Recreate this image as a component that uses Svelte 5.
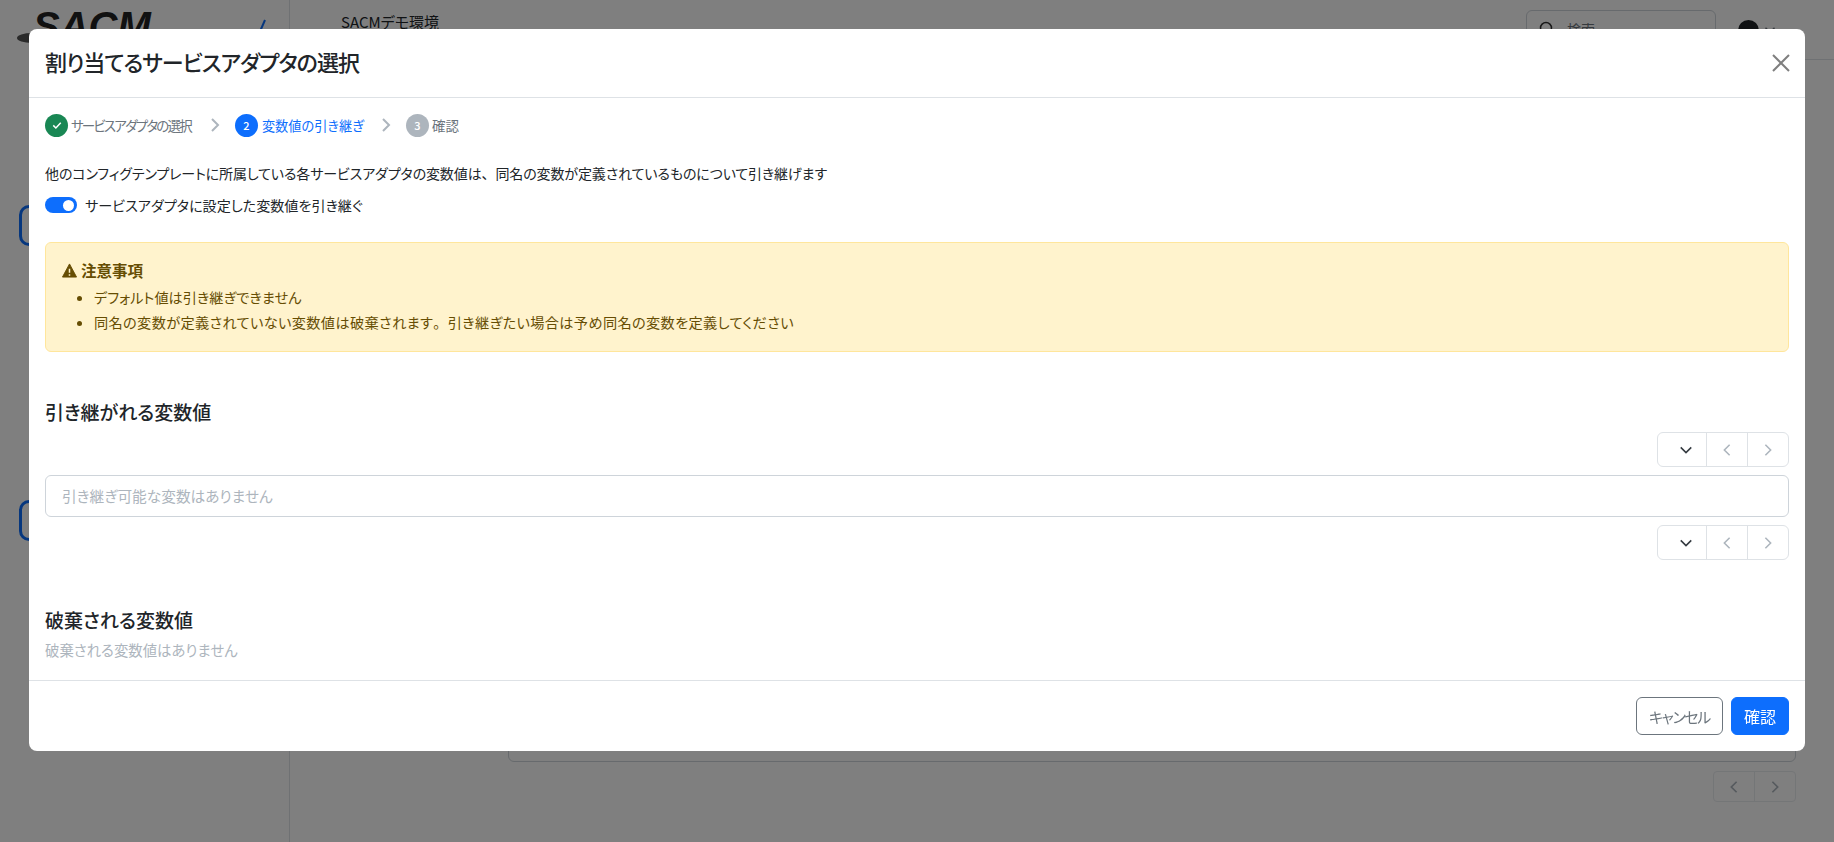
<script>
  const notes = [
    ['デフォルト値は引き継ぎできません'],
    ['同名の変数が定義されていない変数値は破棄されます', '引き継ぎたい場合は予め同名の変数を定義してください']
  ];
</script>

{#snippet pager()}
  <div class="pager">
    <button class="pg size" aria-label="件数">
      <svg width="14" height="14" viewBox="0 0 16 16"><path d="M2 5l6 6 6-6" fill="none" stroke="#343a40" stroke-width="1.8" /></svg>
    </button>
    <button class="pg" aria-label="前へ">
      <svg width="14" height="14" viewBox="0 0 16 16"><path d="M11 2L5 8l6 6" fill="none" stroke="#adb5bd" stroke-width="1.8" /></svg>
    </button>
    <button class="pg" aria-label="次へ">
      <svg width="14" height="14" viewBox="0 0 16 16"><path d="M5 2l6 6-6 6" fill="none" stroke="#adb5bd" stroke-width="1.8" /></svg>
    </button>
  </div>
{/snippet}

{#snippet sep()}
  <svg class="sep" width="14" height="16" viewBox="0 0 14 16"><path d="M4 2l6 6-6 6" fill="none" stroke="#adb5bd" stroke-width="2" /></svg>
{/snippet}

<div class="page">
  <aside class="sidebar">
    <div class="brand">
      <div class="logo">
        <span class="swoosh"></span>
        <span class="logo-text">SACM</span>
      </div>
      <svg class="collapse" width="12" height="20" viewBox="0 0 12 20"><path d="M10 2L3 18" fill="none" stroke="#0d6efd" stroke-width="2" /></svg>
    </div>
    <div class="side-item"></div>
    <div class="side-item second"></div>
  </aside>
  <main class="main">
    <header class="topbar">
      <span class="env">SACMデモ環境</span>
      <div class="search">
        <svg width="16" height="16" viewBox="0 0 16 16"><circle cx="7" cy="7" r="5.5" fill="none" stroke="#333" stroke-width="1.5" /><path d="M11 11l4 4" stroke="#333" stroke-width="1.5" /></svg>
        <span>検索</span>
      </div>
      <span class="avatar"></span>
      <svg class="caret" width="12" height="12" viewBox="0 0 16 16"><path d="M2 5l6 6 6-6" fill="none" stroke="#6c757d" stroke-width="2" /></svg>
    </header>
    <div class="content">
      <div class="card"></div>
      <div class="bg-pager">
        <span><svg width="14" height="14" viewBox="0 0 16 16"><path d="M11 2L5 8l6 6" fill="none" stroke="#adb5bd" stroke-width="2" /></svg></span>
        <span><svg width="14" height="14" viewBox="0 0 16 16"><path d="M5 2l6 6-6 6" fill="none" stroke="#adb5bd" stroke-width="2" /></svg></span>
      </div>
    </div>
  </main>
</div>

<div class="backdrop">
  <div class="modal">
    <div class="modal-header">
      <h1>割り当てるサービスアダプタの選択</h1>
      <button class="close" aria-label="閉じる">
        <svg width="20" height="20" viewBox="0 0 20 20"><path d="M2 2l16 16M18 2L2 18" stroke="#7f7f7f" stroke-width="2" /></svg>
      </button>
    </div>

    <div class="modal-body">
      <div class="steps">
        <span class="circle done">
          <svg width="12" height="12" viewBox="0 0 16 16"><path d="M3 8.5l3.5 3.5L13 5" fill="none" stroke="#fff" stroke-width="2" /></svg>
        </span>
        <span class="step-label kana">サービスアダプタの選択</span>
        {@render sep()}
        <span class="circle active">2</span>
        <span class="step-label current">変数値の引き継ぎ</span>
        {@render sep()}
        <span class="circle todo">3</span>
        <span class="step-label">確認</span>
      </div>

      <p class="lead">他のコンフィグテンプレートに所属している各サービスアダプタの変数値は<span class="wide">、</span>同名の変数が定義されているものについて引き継げます</p>

      <div class="switch-row">
        <span class="switch"><span class="knob"></span></span>
        <span>サービスアダプタに設定した変数値を引き継ぐ</span>
      </div>

      <div class="alert">
        <div class="alert-title">
          <svg width="15" height="15" viewBox="0 0 16 16"><path d="M8 1L0.5 15h15z" fill="#664d03" stroke="#664d03" stroke-linejoin="round" /><path d="M8 6v4.5M8 12v1.5" stroke="#fff3cd" stroke-width="1.6" /></svg>
          <span>注意事項</span>
        </div>
        <ul>
          {#each notes as parts}
            <li>{parts[0]}{#if parts[1]}<span class="wide">。</span>{parts[1]}{/if}</li>
          {/each}
        </ul>
      </div>

      <h2 class="inherit-title">引き継がれる変数値</h2>
      <div class="pager-row">{@render pager()}</div>
      <div class="empty-box">引き継ぎ可能な変数はありません</div>
      <div class="pager-row">{@render pager()}</div>

      <h2 class="discard-title">破棄される変数値</h2>
      <p class="muted">破棄される変数値はありません</p>
    </div>

    <div class="modal-footer">
      <button class="btn cancel">キャンセル</button>
      <button class="btn ok">確認</button>
    </div>
  </div>
</div>

<style>
  :global(body) {
    margin: 0;
    background: #fff;
    font-family: "Noto Sans CJK JP", "Noto Sans", sans-serif;
    font-size: 14px;
    color: #212529;
    font-feature-settings: "palt";
    overflow: hidden;
  }

  .page {
    display: flex;
    height: 842px;
  }

  .sidebar {
    width: 290px;
    flex: none;
    border-right: 1px solid #dee2e6;
    padding-left: 19px;
    box-sizing: border-box;
  }

  .brand {
    display: flex;
    align-items: flex-start;
    height: 205px;
    width: 250px;
  }

  .logo {
    position: relative;
    width: 222px;
    padding: 4px 0 0 14px;
  }

  .logo-text {
    font: italic bold 40px/44px "Liberation Sans", sans-serif;
    color: #222;
  }

  .swoosh {
    position: absolute;
    left: -2px;
    top: 33px;
    width: 30px;
    height: 10px;
    border-radius: 50%;
    background: #555;
  }

  .collapse {
    margin-top: 18px;
  }

  .side-item {
    width: 240px;
    height: 41px;
    border: 3px solid #0d6efd;
    border-radius: 10px;
    box-sizing: border-box;
  }

  .second {
    margin-top: 254px;
  }

  .main {
    flex: 1;
    display: flex;
    flex-direction: column;
  }

  .topbar {
    height: 60px;
    box-sizing: border-box;
    border-bottom: 1px solid #dee2e6;
    display: flex;
    align-items: flex-start;
    padding: 10px 0 0 51px;
  }

  .env {
    font-size: 15px;
    line-height: 24px;
    flex: 1;
  }

  .search {
    width: 190px;
    height: 38px;
    border: 1px solid #ced4da;
    border-radius: 6px;
    display: flex;
    align-items: center;
    gap: 12px;
    padding-left: 12px;
    box-sizing: border-box;
    color: #6c757d;
  }

  .avatar {
    width: 21px;
    height: 21px;
    border-radius: 50%;
    background: #212529;
    margin: 10px 5px 0 22px;
  }

  .caret {
    margin: 14px 58px 0 0;
  }

  .content {
    flex: 1;
    display: flex;
    flex-direction: column;
    align-items: flex-end;
    padding: 0 38px 0 218px;
  }

  .card {
    align-self: stretch;
    height: 702px;
    border: 1px solid #ced4da;
    border-radius: 6px;
    box-sizing: border-box;
  }

  .bg-pager {
    display: flex;
    margin-top: 9px;
    border: 1px solid #e9ecef;
    border-radius: 4px;
  }

  .bg-pager span {
    width: 40px;
    height: 29px;
    display: flex;
    align-items: center;
    justify-content: center;
  }

  .bg-pager span + span {
    border-left: 1px solid #e9ecef;
  }

  .backdrop {
    position: fixed;
    inset: 0;
    background: rgba(0, 0, 0, 0.5);
  }

  .modal {
    position: absolute;
    left: 29px;
    top: 29px;
    width: 1776px;
    height: 722px;
    background: #fff;
    border-radius: 8px;
    display: flex;
    flex-direction: column;
    overflow: hidden;
  }

  .modal-header {
    height: 69px;
    flex: none;
    box-sizing: border-box;
    border-bottom: 1px solid #dee2e6;
    display: flex;
    align-items: center;
    justify-content: space-between;
    padding: 0 14px 0 16px;
  }

  h1 {
    margin: 0;
    font-size: 22px;
    font-weight: 500;
    letter-spacing: -1px;
    position: relative;
    top: -2px;
  }

  .close {
    border: 0;
    background: none;
    padding: 0;
    display: flex;
  }

  .modal-body {
    flex: 1;
    padding: 15px 16px 0;
    overflow: hidden;
  }

  .steps {
    display: flex;
    align-items: center;
    height: 24px;
    color: #6c757d;
    font-size: 13.5px;
  }

  .kana {
    letter-spacing: -1.8px;
    margin-right: 2px;
  }

  .circle {
    width: 23px;
    height: 23px;
    border-radius: 50%;
    display: flex;
    align-items: center;
    justify-content: center;
    color: #fff;
    font-size: 11px;
    font-weight: 500;
    flex: none;
    margin-right: 3px;
  }

  .done { background: #198754; }
  .active { background: #0d6efd; margin-right: 4px; }
  .todo { background: #adb5bd; }
  .current { color: #0d6efd; font-size: 13.2px; }

  .sep {
    margin: 0 13px 0 15px;
  }

  .lead {
    margin: 25px 0 0;
    font-size: 14px;
    line-height: 22px;
    letter-spacing: -0.12px;
  }

  .wide {
    font-feature-settings: normal;
  }

  .switch-row {
    display: flex;
    align-items: center;
    gap: 8px;
    margin-top: 10px;
    height: 22px;
    font-size: 14.1px;
  }

  .switch {
    width: 32px;
    height: 16px;
    border-radius: 8px;
    background: #0d6efd;
    display: flex;
    align-items: center;
    justify-content: flex-end;
    padding-right: 3px;
    box-sizing: border-box;
  }

  .knob {
    width: 11px;
    height: 11px;
    border-radius: 50%;
    background: #fff;
  }

  .alert {
    margin-top: 26px;
    height: 110px;
    box-sizing: border-box;
    background: #fff3cd;
    border: 1px solid #ffe69c;
    border-radius: 6px;
    color: #664d03;
    padding: 15px 16px 16px;
    font-size: 14.2px;
  }

  .alert-title {
    display: flex;
    align-items: center;
    gap: 4px;
    font-weight: 700;
    font-size: 15.5px;
    line-height: 24px;
  }

  ul {
    margin: 3px 0 0;
    padding-left: 32px;
  }

  li {
    line-height: 25px;
  }

  li:nth-child(2) {
    letter-spacing: 0.35px;
  }

  h2 {
    margin: 0;
    font-size: 19px;
    font-weight: 500;
    line-height: 28px;
  }

  .inherit-title {
    margin-top: 46px;
  }

  .pager-row {
    display: flex;
    justify-content: flex-end;
  }

  .inherit-title + .pager-row {
    margin-top: 6px;
  }

  .pager {
    display: flex;
    height: 35px;
    border: 1px solid #dee2e6;
    border-radius: 6px;
    box-sizing: border-box;
    width: 132px;
  }

  .pg {
    border: 0;
    background: none;
    padding: 0;
    width: 41px;
    display: flex;
    align-items: center;
    justify-content: center;
    border-left: 1px solid #dee2e6;
  }

  .pg.size {
    width: 48px;
    border-left: 0;
    padding-left: 8px;
  }

  .empty-box {
    height: 42px;
    margin: 8px 0;
    box-sizing: border-box;
    border: 1px solid #ced4da;
    border-radius: 6px;
    padding: 0 16px 2px;
    display: flex;
    align-items: center;
    color: #adb5bd;
    font-size: 14.7px;
  }

  .discard-title {
    margin-top: 46px;
  }

  .muted {
    margin: 5px 0 0;
    color: #adb5bd;
    font-size: 14.4px;
    line-height: 22px;
  }

  .modal-footer {
    height: 71px;
    flex: none;
    box-sizing: border-box;
    border-top: 1px solid #dee2e6;
    display: flex;
    justify-content: flex-end;
    align-items: flex-start;
    gap: 8px;
    padding: 16px 16px 0;
  }

  .btn {
    height: 38px;
    border-radius: 6px;
    font-family: inherit;
    font-size: 16px;
    font-feature-settings: inherit;
    padding: 0;
  }

  .cancel {
    width: 87px;
    background: #fff;
    border: 1px solid #6c757d;
    color: #6c757d;
    font-size: 15px;
    letter-spacing: -1.4px;
  }

  .ok {
    width: 58px;
    background: #0d6efd;
    border: 1px solid #0d6efd;
    color: #fff;
  }
</style>
